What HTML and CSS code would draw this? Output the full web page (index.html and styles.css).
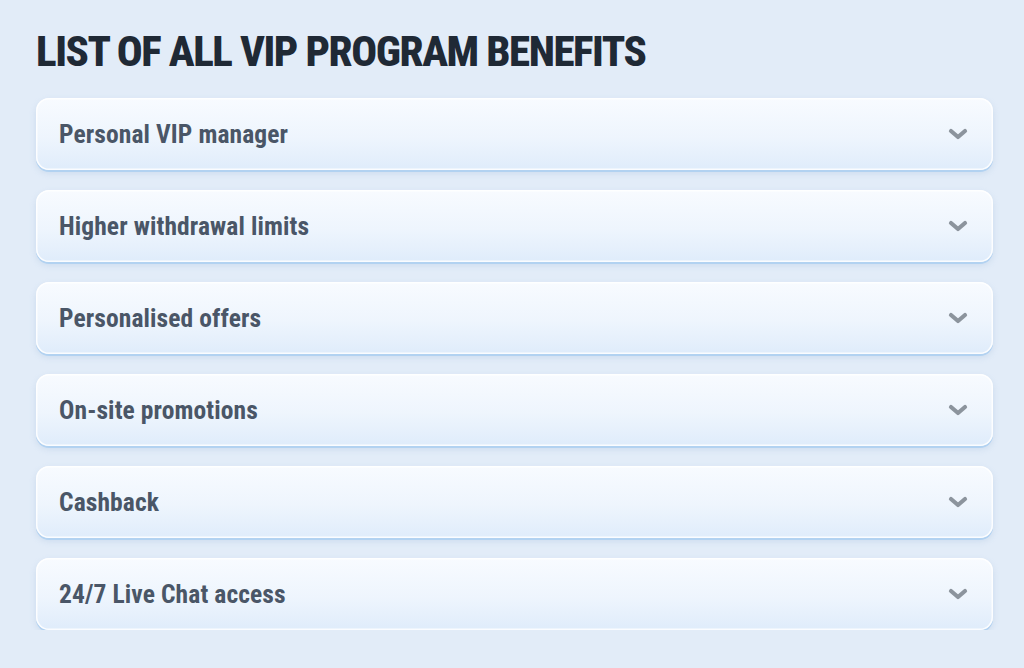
FILE: index.html
```html
<!DOCTYPE html>
<html lang="en">

<head>
    <meta charset="UTF-8">
    <meta name="viewport" content="width=device-width, initial-scale=1.0">
    <title>VIP program benefits</title>
    <link rel="stylesheet" href="styles.css">
</head>

<body>
    <main class="benefits">
        <h1 class="benefits-title">LIST OF ALL VIP PROGRAM BENEFITS</h1>
        <ul class="benefit-list">
            <li class="benefit">
                <span class="benefit-name">Personal VIP manager</span>
                <svg class="chevron" viewBox="0 0 20 12" width="20" height="12"><path d="M3 3l7 6 7-6"/></svg>
            </li>
            <li class="benefit">
                <span class="benefit-name">Higher withdrawal limits</span>
                <svg class="chevron" viewBox="0 0 20 12" width="20" height="12"><path d="M3 3l7 6 7-6"/></svg>
            </li>
            <li class="benefit">
                <span class="benefit-name">Personalised offers</span>
                <svg class="chevron" viewBox="0 0 20 12" width="20" height="12"><path d="M3 3l7 6 7-6"/></svg>
            </li>
            <li class="benefit">
                <span class="benefit-name">On-site promotions</span>
                <svg class="chevron" viewBox="0 0 20 12" width="20" height="12"><path d="M3 3l7 6 7-6"/></svg>
            </li>
            <li class="benefit">
                <span class="benefit-name">Cashback</span>
                <svg class="chevron" viewBox="0 0 20 12" width="20" height="12"><path d="M3 3l7 6 7-6"/></svg>
            </li>
            <li class="benefit">
                <span class="benefit-name">24/7 Live Chat access</span>
                <svg class="chevron" viewBox="0 0 20 12" width="20" height="12"><path d="M3 3l7 6 7-6"/></svg>
            </li>
        </ul>
    </main>
</body>

</html>
```

FILE: styles.css
```css
body {
    margin: 0;
    background: #e2ecf8;
    font-family: Roboto, "Open Sans", sans-serif;
    font-stretch: condensed;
}
.benefits {
    padding: 26px 31px 0 36px;
}
.benefits-title {
    margin: 0 0 22px;
    font-size: 43px;
    line-height: 50px;
    font-weight: 800;
    letter-spacing: -1.45px;
    color: #1f2935;
}
.benefit-list {
    display: flex;
    flex-direction: column;
    gap: 20px;
    margin: 0;
    padding: 0;
    list-style: none;
}
.benefit {
    display: flex;
    align-items: center;
    justify-content: space-between;
    height: 72px;
    padding: 0 25px 0 23px;
    border-radius: 13px;
    background: linear-gradient(180deg, #f8fbff 0%, #eef5fd 55%, #dfecfb 100%);
    box-shadow: inset 0 0 0 1.5px rgba(255, 255, 255, 0.85), 0 2px 0 #b2d2f1, 0 3px 6px rgba(150, 180, 215, 0.3);
}
.benefit-name {
    font-size: 25.5px;
    font-weight: 700;
    letter-spacing: 0.1px;
    color: #4a5667;
}
.chevron {
    fill: none;
    stroke: #8c949d;
    stroke-width: 4.2;
    stroke-linecap: round;
    stroke-linejoin: round;
}
```
